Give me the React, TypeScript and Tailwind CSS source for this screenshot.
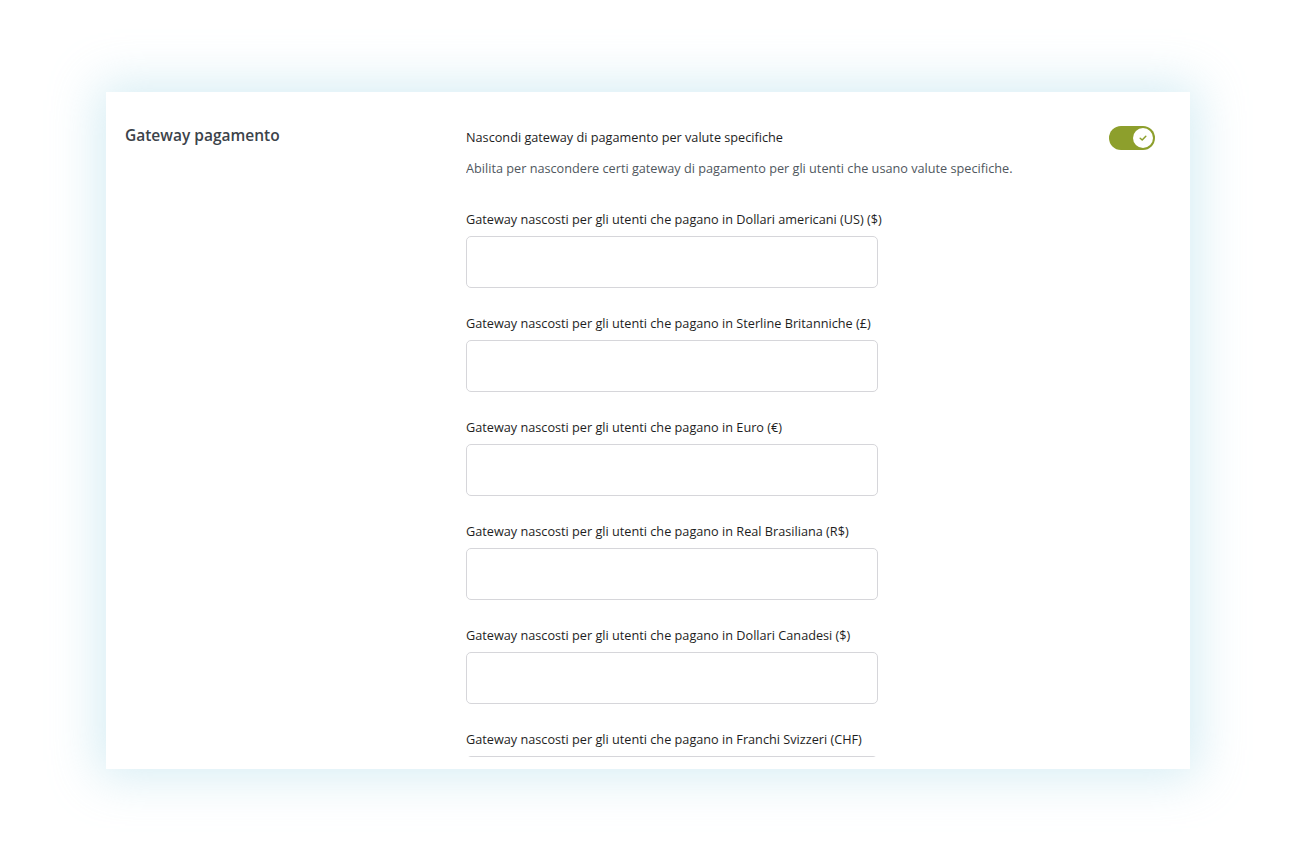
import React from "react";

const fields = [
  "Dollari americani (US) ($)",
  "Sterline Britanniche (£)",
  "Euro (€)",
  "Real Brasiliana (R$)",
  "Dollari Canadesi ($)",
  "Franchi Svizzeri (CHF)",
];

export default function App() {
  return (
    <div
      className="w-[1300px] h-[868px] bg-white overflow-hidden pt-[92px] pl-[106px]"
      style={{ fontFamily: '"Open Sans", "Noto Sans", sans-serif' }}
    >
      <div className="w-[1084px] h-[677px] bg-white flex items-start shadow-[0_0_45px_8px_rgba(165,215,230,0.45)]">
        <div className="w-[360px] pl-[19px] pt-[32px] shrink-0">
          <h2 className="text-[15.5px] leading-[22px] font-semibold text-[#3c434a]">
            Gateway pagamento
          </h2>
        </div>
        <div className="flex-1 pr-[35px] pt-[35px] h-[665px] overflow-hidden">
          <div className="flex items-start justify-between">
            <div className="text-[12.7px] leading-[20px] text-[#1e1e1e]">
              Nascondi gateway di pagamento per valute specifiche
            </div>
            <div className="w-[46px] h-[24px] rounded-full bg-[#8d9f2c] flex items-center justify-end pr-[2px] mt-[-1px]">
              <div className="w-[20px] h-[20px] rounded-full bg-white flex items-center justify-center">
                <svg width="10" height="10" viewBox="0 0 10 10" fill="none">
                  <path d="M2.2 5.2 L4.2 7 L7.8 3.2" stroke="#8d9f2c" strokeWidth="1.5" strokeLinecap="round" strokeLinejoin="round" />
                </svg>
              </div>
            </div>
          </div>
          <p className="mt-[8px] text-[12.7px] leading-[20px] text-[#50575e]">
            Abilita per nascondere certi gateway di pagamento per gli utenti che usano valute specifiche.
          </p>
          <div className="mt-[31px] flex flex-col gap-[25px]">
            {fields.map((f) => (
              <div key={f} className="flex flex-col gap-[7px]">
                <label className="text-[12.7px] leading-[20px] text-[#1e1e1e]">
                  Gateway nascosti per gli utenti che pagano in {f}
                </label>
                <div className="w-[412px] h-[52px] rounded-[5px] border border-[#d6d6da] bg-white" />
              </div>
            ))}
          </div>
        </div>
      </div>
    </div>
  );
}
